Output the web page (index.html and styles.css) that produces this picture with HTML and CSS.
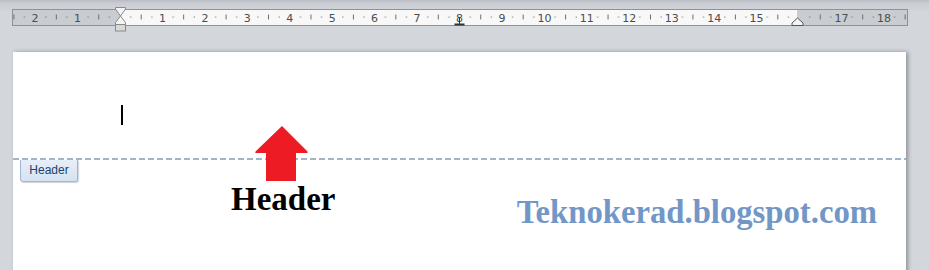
FILE: index.html
```html
<!DOCTYPE html>
<html lang="en">
<head>
    <meta charset="UTF-8">
    <meta name="viewport" content="width=device-width, initial-scale=1.0">
    <title>Header - Teknokerad</title>
    <link rel="stylesheet" href="styles.css">
</head>
<body>
    <!-- Ruler -->
    <div class="ruler-bar">
        <svg class="ruler" width="929" height="36" viewBox="0 0 929 36">
            <defs>
                <pattern id="ticks" x="120" y="0" width="42.44" height="36" patternUnits="userSpaceOnUse">
                    <rect x="10.2" y="16.5" width="1" height="1.2" fill="#6a6d72"/>
                    <rect x="20.7" y="14.5" width="1" height="5" fill="#6a6d72"/>
                    <rect x="31.3" y="16.5" width="1" height="1.2" fill="#6a6d72"/>
                </pattern>
            </defs>
            <rect x="12.5" y="9.5" width="895" height="16" fill="#c9ccd1" stroke="#8e9196"/>
            <rect x="120" y="10" width="677" height="15" fill="#f8f8f8"/>
            <rect x="13" y="10" width="894" height="15" fill="url(#ticks)"/>
            <g class="ruler-num" text-anchor="middle">
                <text x="35.1" y="21.5">2</text>
                <text x="77.6" y="21.5">1</text>
                <text x="162.4" y="21.5">1</text>
                <text x="204.9" y="21.5">2</text>
                <text x="247.3" y="21.5">3</text>
                <text x="289.8" y="21.5">4</text>
                <text x="332.2" y="21.5">5</text>
                <text x="374.6" y="21.5">6</text>
                <text x="417.1" y="21.5">7</text>
                <text x="459.5" y="21.5">8</text>
                <text x="502" y="21.5">9</text>
                <text x="544.4" y="21.5">10</text>
                <text x="586.8" y="21.5">11</text>
                <text x="629.3" y="21.5">12</text>
                <text x="671.7" y="21.5">13</text>
                <text x="714.2" y="21.5">14</text>
                <text x="756.6" y="21.5">15</text>
                <text x="841.5" y="21.5">17</text>
                <text x="883.9" y="21.5">18</text>
            </g>
            <!-- tab stop at 8 -->
            <rect x="459" y="17" width="1" height="7" fill="#333"/>
            <rect x="454.5" y="23.5" width="10" height="2" fill="#333"/>
            <!-- indent markers -->
            <path d="M115.5 7.5 H125.5 V9 L120.5 16 L115.5 9 Z" fill="#f4f4f4" stroke="#8a8a8a"/>
            <path d="M120.5 16 L125.5 22.5 V24.5 H115.5 V22.5 Z" fill="#f4f4f4" stroke="#8a8a8a"/>
            <rect x="115.5" y="24.5" width="10" height="6.5" fill="#d9d9d9" stroke="#8a8a8a"/>
            <path d="M792 25.5 V23 L797.5 18 L803 23 V25.5 Z" fill="#f4f4f4" stroke="#555"/>
        </svg>
    </div>

    <!-- Page -->
    <div class="page">
        <div class="header-area">
            <span class="cursor"></span>
        </div>
        <div class="header-line"></div>
        <div class="header-tag">Header</div>
        <div class="captions">
            <span class="caption">Header</span>
            <span class="site">Teknokerad.blogspot.com</span>
        </div>

        <!-- red arrow pointing to the header -->
        <svg class="arrow" width="58" height="57" viewBox="0 0 58 57">
            <path d="M29 1 L54 26 Q56 28 53 28 H43 V56 H13 V28 H4 Q1 28 3 26 Z" fill="#ed1c24"/>
        </svg>
    </div>
</body>
</html>
```

FILE: styles.css
```css
body {
    margin: 0;
    width: 929px;
    height: 270px;
    overflow: hidden;
    background: linear-gradient(#b9bdc3 0, #c9ccd2 3px, #d3d6db 12px, #d3d6db 100%);
    font-family: "Liberation Serif", "Times New Roman", serif;
}
.ruler-bar {
    height: 52px;
}
.ruler {
    display: block;
}
.ruler-num {
    font-family: "DejaVu Sans", sans-serif;
    font-size: 11px;
    fill: #4a4d52;
}
.page {
    position: relative;
    margin-left: 13px;
    width: 893px;
    height: 230px;
    background: #fff;
    box-shadow: 2px 0 4px rgba(60, 64, 70, 0.45);
}
.header-area {
    height: 106px;
    padding-left: 108px;
    box-sizing: border-box;
    padding-top: 53px;
}
.cursor {
    display: block;
    width: 2px;
    height: 20px;
    background: #000;
}
.header-line {
    height: 2px;
    background: repeating-linear-gradient(90deg, #a4b5c7 0, #a4b5c7 6px, transparent 6px, transparent 9px);
}
.header-tag {
    margin-left: 7px;
    width: 58px;
    height: 22px;
    box-sizing: border-box;
    border: 1px solid #a3b6cd;
    border-top: none;
    border-radius: 0 0 3px 3px;
    background: linear-gradient(#e6eef8, #d6e3f2);
    box-shadow: 1px 1px 1px rgba(120, 130, 145, 0.35);
    font-family: "Liberation Sans", Arial, sans-serif;
    font-size: 12px;
    line-height: 21px;
    color: #20406e;
    text-align: center;
}
.captions {
    display: flex;
    justify-content: space-between;
    align-items: flex-start;
    margin-top: 1px;
    padding-left: 218px;
    padding-right: 29px;
}
.caption {
    font-size: 33px;
    font-weight: bold;
    line-height: 33px;
    color: #000;
}
.site {
    margin-top: 13px;
    font-size: 32.7px;
    font-weight: bold;
    line-height: 33px;
    color: #7296c6;
}
.arrow {
    position: absolute;
    left: 240px;
    top: 73px;
}
```
